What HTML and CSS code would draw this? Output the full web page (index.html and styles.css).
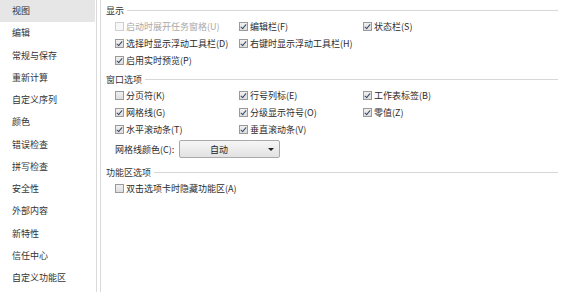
FILE: index.html
```html
<!DOCTYPE html>
<html lang="zh-CN">
<head>
<meta charset="utf-8">
<title>选项</title>
<link rel="stylesheet" href="styles.css">
</head>
<body>
<div class="app">
  <nav class="sidebar">
    <div class="nav-item active">视图</div>
    <div class="nav-item">编辑</div>
    <div class="nav-item">常规与保存</div>
    <div class="nav-item">重新计算</div>
    <div class="nav-item">自定义序列</div>
    <div class="nav-item">颜色</div>
    <div class="nav-item">错误检查</div>
    <div class="nav-item">拼写检查</div>
    <div class="nav-item">安全性</div>
    <div class="nav-item">外部内容</div>
    <div class="nav-item">新特性</div>
    <div class="nav-item">信任中心</div>
    <div class="nav-item">自定义功能区</div>
  </nav>
  <main class="content">
    <div class="section-title first"><span>显示</span></div>
    <div class="grid">
      <label class="opt disabled"><span class="cb"></span>启动时展开任务窗格(U)</label>
      <label class="opt"><span class="cb on"></span>编辑栏(F)</label>
      <label class="opt"><span class="cb on"></span>状态栏(S)</label>
      <label class="opt"><span class="cb on"></span>选择时显示浮动工具栏(D)</label>
      <label class="opt"><span class="cb on"></span>右键时显示浮动工具栏(H)</label>
      <span></span>
      <label class="opt"><span class="cb on"></span>启用实时预览(P)</label>
    </div>

    <div class="section-title second"><span>窗口选项</span></div>
    <div class="grid">
      <label class="opt"><span class="cb"></span>分页符(K)</label>
      <label class="opt"><span class="cb on"></span>行号列标(E)</label>
      <label class="opt"><span class="cb on"></span>工作表标签(B)</label>
      <label class="opt"><span class="cb on"></span>网格线(G)</label>
      <label class="opt"><span class="cb on"></span>分级显示符号(O)</label>
      <label class="opt"><span class="cb on"></span>零值(Z)</label>
      <label class="opt"><span class="cb on"></span>水平滚动条(T)</label>
      <label class="opt"><span class="cb on"></span>垂直滚动条(V)</label>
    </div>
    <div class="color-row">
      <span class="color-label">网格线颜色(C):</span>
      <div class="select"><span class="select-text">自动</span><span class="arrow"></span></div>
    </div>

    <div class="section-title third"><span>功能区选项</span></div>
    <div class="grid">
      <label class="opt"><span class="cb"></span>双击选项卡时隐藏功能区(A)</label>
    </div>
  </main>
</div>
</body>
</html>
```
FILE: styles.css
```css
* { box-sizing: border-box; }
html, body {
  margin: 0;
  padding: 0;
  background: #ffffff;
}
body {
  font-family: "Noto Sans CJK SC", "Noto Sans", sans-serif;
  font-size: 9px;
  color: #2b2b2b;
  width: 563px;
  height: 292px;
  overflow: hidden;
}
.app {
  display: flex;
  height: 292px;
}
.sidebar {
  width: 97px;
  flex: none;
  border-right: 1px solid #dadada;
  background: #ffffff;
}
.nav-item {
  height: 22.25px;
  line-height: 22.25px;
  padding-left: 12px;
  width: 95px;
  color: #333333;
  white-space: nowrap;
}
.nav-item.active {
  background: #e6e6e6;
}
.content {
  flex: 1;
  margin-left: 3px;
  border-left: 1px solid #dadada;
  padding-left: 5px;
  padding-right: 5px;
}
.section-title {
  display: flex;
  align-items: center;
  height: 15px;
  color: #333333;
}
.section-title.first {
  margin-top: 3px;
}
.section-title.second {
  margin-top: 3px;
}
.section-title.third {
  margin-top: 6px;
}
.section-title span {
  flex: none;
  padding-right: 3px;
}
.section-title::after {
  content: "";
  flex: 1;
  height: 1px;
  background: #d8d8d8;
}
.grid {
  display: grid;
  grid-template-columns: 124px 124px 124px;
  grid-auto-rows: 17px;
  padding-left: 9px;
}
.opt {
  display: flex;
  align-items: center;
  white-space: nowrap;
  color: #2b2b2b;
}
.opt.disabled {
  color: #a8a8a8;
}
.cb {
  width: 9px;
  height: 9px;
  flex: none;
  margin-right: 2px;
  border: 1px solid #9a9a9a;
  background: linear-gradient(#f0f0f0, #dedede);
  position: relative;
}
.opt.disabled .cb {
  border-color: #cfcfcf;
  background: #f7f7f7;
}
.cb.on::after {
  content: "";
  position: absolute;
  left: 2px;
  top: 0px;
  width: 2px;
  height: 5px;
  border-right: 1.3px solid #3a4a66;
  border-bottom: 1.3px solid #3a4a66;
  transform: rotate(40deg);
}
.color-row {
  display: flex;
  align-items: center;
  height: 20px;
  margin-top: 1px;
  padding-left: 9px;
}
.color-label {
  width: 64px;
  white-space: nowrap;
}
.select {
  width: 101px;
  height: 18px;
  border: 1px solid #a9a9a9;
  border-radius: 2px;
  background: linear-gradient(#f6f6f6, #e2e2e2);
  display: flex;
  align-items: center;
  position: relative;
}
.select-text {
  flex: 1;
  text-align: center;
  padding-right: 10px;
  color: #222222;
}
.arrow {
  width: 0;
  height: 0;
  border-left: 3px solid transparent;
  border-right: 3px solid transparent;
  border-top: 3px solid #222222;
  margin-right: 5px;
}
```
